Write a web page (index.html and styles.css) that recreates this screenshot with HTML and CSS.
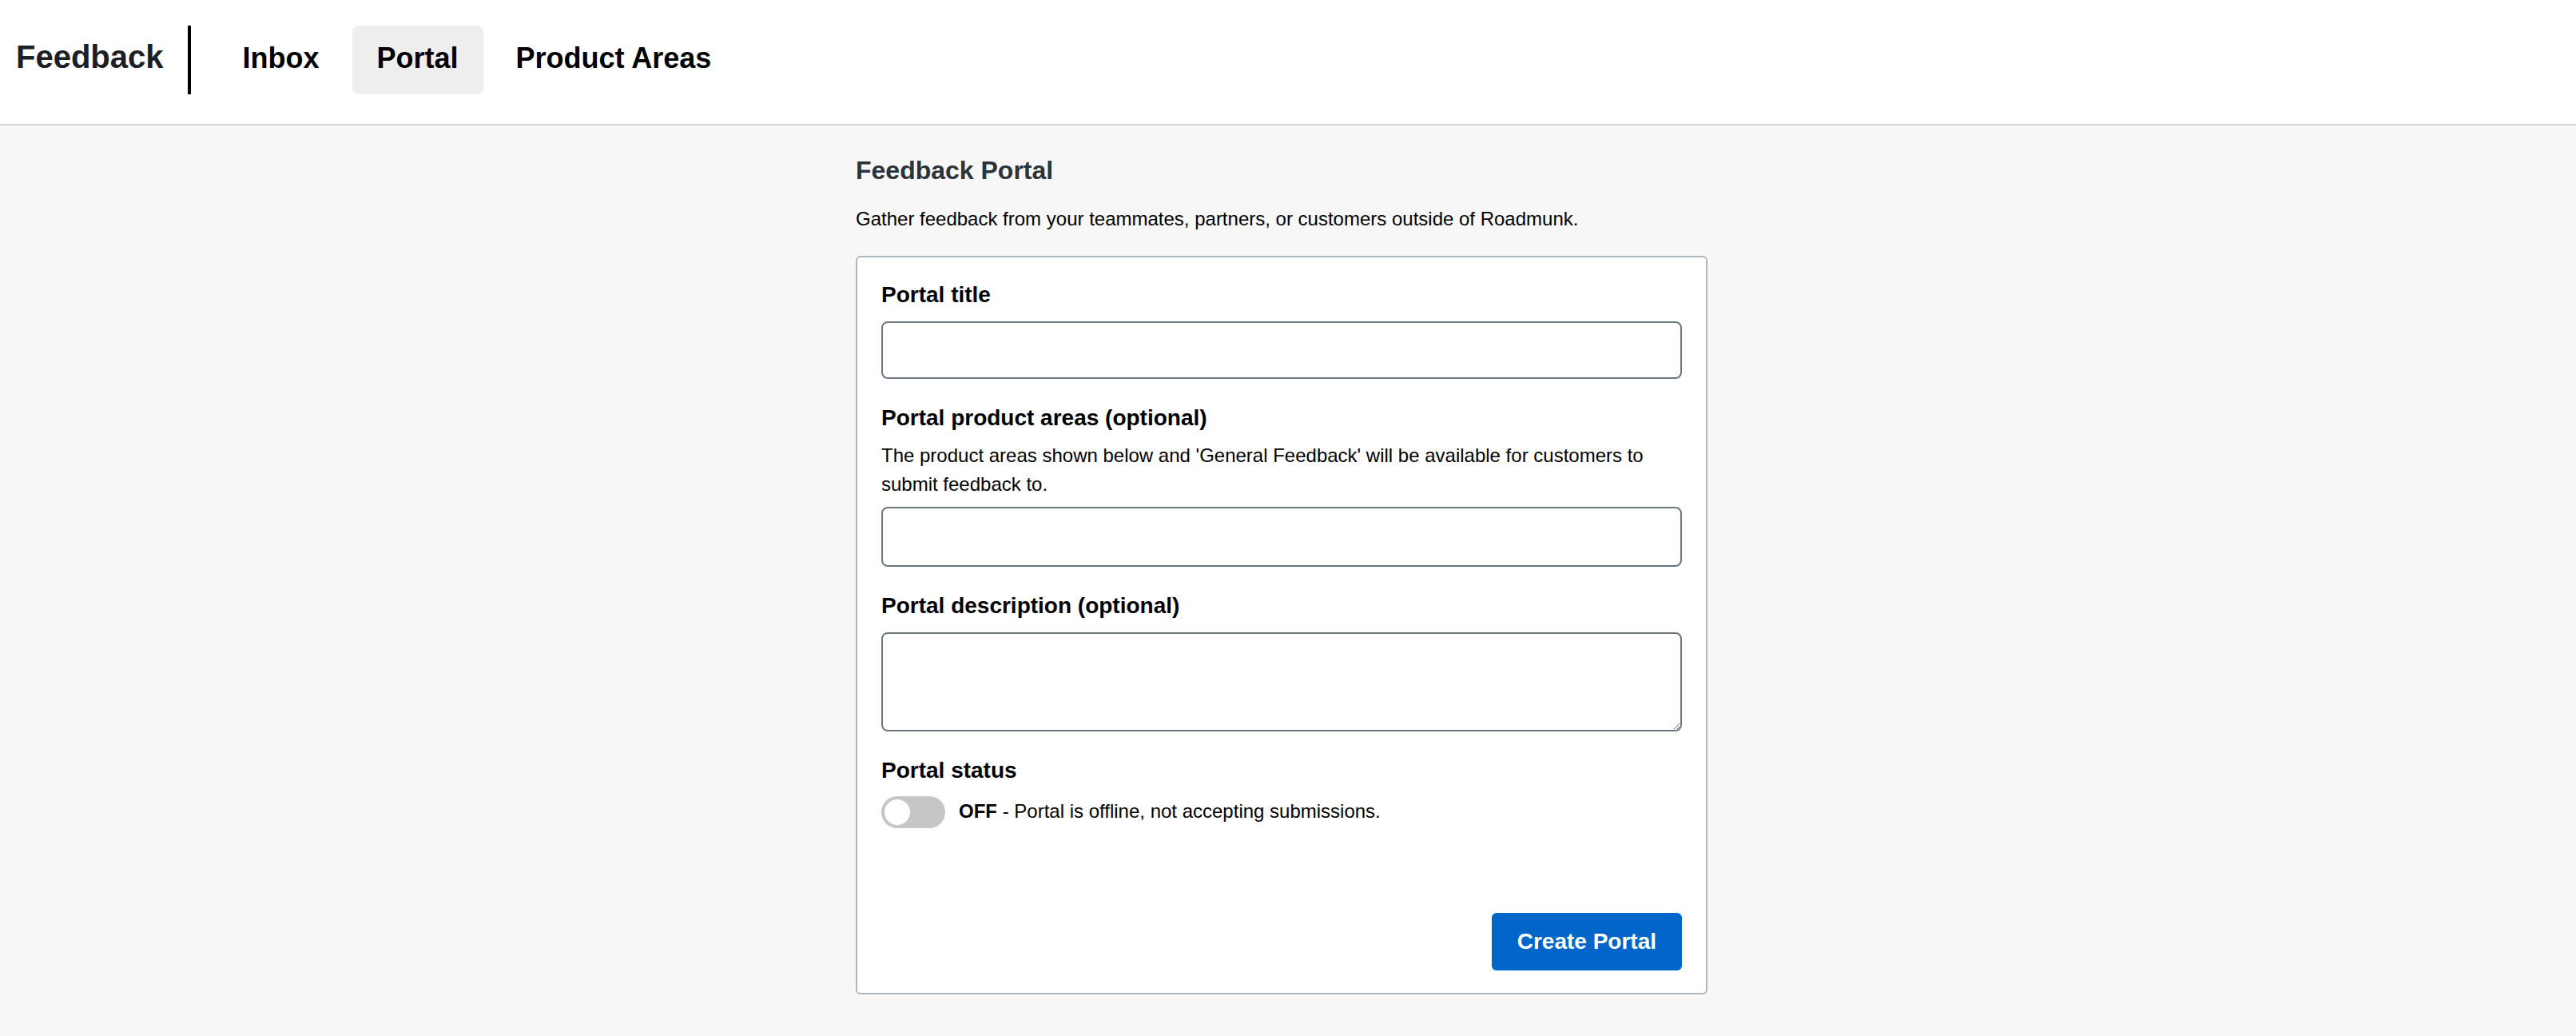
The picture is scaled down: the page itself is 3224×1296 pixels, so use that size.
FILE: index.html
```html
<!DOCTYPE html>
<html lang="en">
<head>
  <meta charset="UTF-8">
  <meta name="viewport" content="width=device-width, initial-scale=1.0">
  <title>Feedback Portal</title>
  <link rel="stylesheet" href="styles.css">
</head>
<body>
  <header class="topbar">
    <div class="brand">Feedback</div>
    <div class="divider"></div>
    <nav class="nav">
      <a class="nav-item" href="#">Inbox</a>
      <a class="nav-item active" href="#">Portal</a>
      <a class="nav-item" href="#">Product Areas</a>
    </nav>
  </header>

  <main class="main">
    <div class="container">
      <h1 class="page-title">Feedback Portal</h1>
      <p class="page-intro">Gather feedback from your teammates, partners, or customers outside of Roadmunk.</p>

      <form class="card" onsubmit="return false">
        <div class="field">
          <label class="field-label" for="title">Portal title</label>
          <input class="field-input" id="title" type="text">
        </div>

        <div class="field">
          <label class="field-label" for="areas">Portal product areas (optional)</label>
          <p class="field-hint">The product areas shown below and 'General Feedback' will be available for customers to submit feedback to.</p>
          <input class="field-input tall" id="areas" type="text">
        </div>

        <div class="field">
          <label class="field-label" for="desc">Portal description (optional)</label>
          <textarea class="field-input area" id="desc"></textarea>
        </div>

        <div class="field">
          <div class="field-label">Portal status</div>
          <div class="status">
            <span class="toggle"><span class="knob"></span></span>
            <span class="status-text"><b>OFF</b> - Portal is offline, not accepting submissions.</span>
          </div>
        </div>

        <div class="card-footer">
          <button class="btn-primary" type="submit">Create Portal</button>
        </div>
      </form>
    </div>
  </main>
</body>
</html>
```

FILE: styles.css
```css
* {
  box-sizing: border-box;
}

body {
  margin: 0;
  font-family: "Liberation Sans", Arial, sans-serif;
  background: #f7f7f7;
  color: #000;
}

.topbar {
  display: flex;
  align-items: flex-start;
  background: #fff;
  padding: 32px 20px 37px;
  border-bottom: 2px solid #d1d6dc;
}

.brand {
  height: 86px;
  line-height: 79px;
  padding-bottom: 7px;
  font-size: 40px;
  font-weight: bold;
  color: #1b2027;
  margin-right: 30px;
}

.divider {
  width: 4px;
  height: 86px;
  background: #000;
}

.nav {
  display: flex;
  gap: 10px;
  margin-left: 34px;
}

.nav-item {
  display: block;
  height: 86px;
  line-height: 81px;
  padding: 0 31px 5px;
  font-size: 36px;
  font-weight: bold;
  color: #000;
  text-decoration: none;
  border-radius: 8px;
}

.nav-item.active {
  background: #eee;
}

.main {
  padding: 37px 16px 0 0;
}

.container {
  width: 1066px;
  margin: 0 auto;
}

.page-title {
  margin: 0;
  font-size: 32px;
  line-height: 38px;
  font-weight: bold;
  color: #2b333b;
}

.page-intro {
  margin: 24px 0 0;
  font-size: 24px;
  line-height: 36px;
}

.card {
  margin-top: 28px;
  background: #fff;
  border: 2px solid #adb7c0;
  border-radius: 6px;
  padding: 30px 30px 28px;
}

.field {
  margin-bottom: 32px;
}

.field-label {
  display: block;
  font-size: 28px;
  line-height: 34px;
  font-weight: bold;
  margin-bottom: 16px;
}

.field-hint {
  margin: -4px 0 10px;
  font-size: 24px;
  line-height: 36px;
}

.field-input {
  display: block;
  width: 100%;
  height: 72px;
  border: 2px solid #6c7782;
  border-radius: 8px;
  background: #fff;
  font-family: inherit;
  font-size: 24px;
  padding: 0 16px;
}

.field-input.tall {
  height: 75px;
}

.field-input.area {
  height: 124px;
  padding: 12px 16px;
}

.status {
  display: flex;
  align-items: center;
  gap: 17px;
  margin-top: -1px;
}

.toggle {
  width: 80px;
  height: 40px;
  border-radius: 20px;
  background: #c6c6c6;
  padding: 4px;
}

.knob {
  display: block;
  width: 32px;
  height: 32px;
  border-radius: 50%;
  background: #fff;
}

.status-text {
  font-size: 24px;
  line-height: 36px;
  margin-top: -3px;
}

.card-footer {
  display: flex;
  justify-content: flex-end;
  margin-top: 106px;
}

.btn-primary {
  height: 72px;
  padding: 0 32px;
  border: none;
  border-radius: 6px;
  background: #0165c9;
  color: #fff;
  font-family: inherit;
  font-size: 28px;
  font-weight: bold;
  cursor: pointer;
}
```
